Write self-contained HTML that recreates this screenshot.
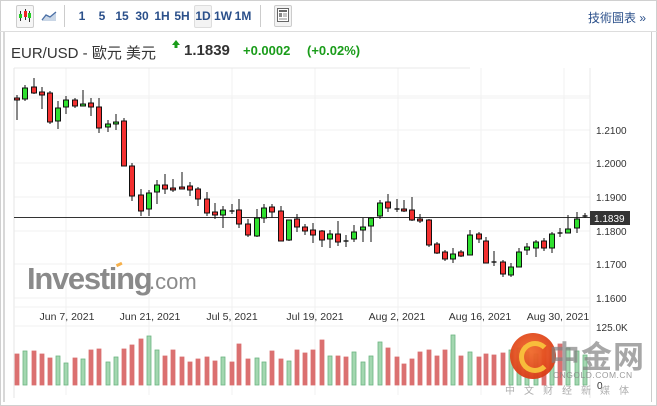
<!DOCTYPE html>
<html><head><meta charset="utf-8"><style>
body{margin:0;width:657px;height:406px;background:#fff;overflow:hidden;font-family:"Liberation Sans","Noto Sans CJK TC",sans-serif;position:relative}
.a{position:absolute}
.tb{font-size:12px;color:#2a4f8a;font-weight:bold;width:20px;text-align:center;top:9px}
</style></head><body>
<div class="a" style="left:0;top:0;width:655px;height:404px;border:1px solid #d0d0d0"></div>
<div class="a" style="left:0;top:31px;width:657px;height:1px;background:#ddd"></div>
<div class="a" style="left:3px;top:32px;width:2px;height:370px;background:#d8d8d8"></div>
<div class="a" style="left:651px;top:32px;width:1px;height:370px;background:#ccc"></div>
<!-- toolbar -->
<div class="a" style="left:16px;top:5px;width:16px;height:21px;border:1px solid #ccc;border-radius:2px;background:#f6f6f6"></div>
<svg class="a" style="left:18px;top:8px" width="14" height="16"><g stroke="#333" stroke-width="1"><line x1="2.5" y1="3" x2="2.5" y2="13"/><line x1="7.5" y1="1" x2="7.5" y2="12"/><line x1="11.5" y1="3" x2="11.5" y2="14"/></g><rect x="1" y="6" width="3" height="4" fill="#2c2"/><rect x="6" y="3" width="3" height="6" fill="#e22"/><rect x="10" y="5" width="3" height="5" fill="#2c2"/></svg>
<svg class="a" style="left:41px;top:9px" width="16" height="13"><path d="M1 11 L5 6 L9 8 L15 3 L15 12 L1 12Z" fill="#c9d6e6"/><path d="M1 11 L5 6 L9 8 L15 3" stroke="#4a6fa5" fill="none" stroke-width="1.3"/></svg>
<div class="a" style="left:64px;top:5px;width:1px;height:22px;background:#ccc"></div>
<div class="a tb" style="left:72px">1</div>
<div class="a tb" style="left:92px">5</div>
<div class="a tb" style="left:112px">15</div>
<div class="a tb" style="left:132px">30</div>
<div class="a tb" style="left:152px">1H</div>
<div class="a tb" style="left:172px">5H</div>
<div class="a" style="left:194px;top:5px;width:16px;height:21px;border:1px solid #ddd;background:#f3f3f3;border-radius:2px"></div>
<div class="a tb" style="left:193px">1D</div>
<div class="a tb" style="left:213px">1W</div>
<div class="a tb" style="left:233px">1M</div>
<div class="a" style="left:260px;top:5px;width:1px;height:22px;background:#ccc"></div>
<div class="a" style="left:274px;top:5px;width:16px;height:20px;border:1px solid #ccc;background:#f3f3f3;border-radius:2px"></div>
<svg class="a" style="left:277px;top:8px" width="12" height="14"><rect x="0.5" y="0.5" width="11" height="13" fill="#fff" stroke="#666"/><rect x="2" y="2" width="8" height="2" fill="#666"/><rect x="2" y="5" width="3" height="4" fill="#888"/><line x1="6" y1="6" x2="10" y2="6" stroke="#888"/><line x1="6" y1="8" x2="10" y2="8" stroke="#888"/><line x1="2" y1="11" x2="10" y2="11" stroke="#888"/></svg>
<div class="a" style="left:588px;top:9px;font-size:12px;color:#2a4f8a">技術圖表 »</div>
<!-- title -->
<div class="a" style="left:11px;top:42px;font-size:15px;color:#333">EUR/USD - 歐元 美元</div>
<svg class="a" style="left:172px;top:40px" width="8" height="8"><path d="M4 0 L8 5 L5.5 5 L5.5 8 L2.5 8 L2.5 5 L0 5Z" fill="#1a9c1a"/></svg>
<div class="a" style="left:184px;top:42px;font-size:15px;font-weight:bold;color:#333">1.1839</div>
<div class="a" style="left:243px;top:43px;font-size:13px;font-weight:bold;color:#1a9c1a">+0.0002</div>
<div class="a" style="left:307px;top:43px;font-size:13px;font-weight:bold;color:#1a9c1a">(+0.02%)</div>
<svg class="a" style="left:0;top:0" width="657" height="406" id="ch"></svg>
<div class="a" style="left:510px;top:333px;width:46px;height:46px;border-radius:50%;background:radial-gradient(circle at 45% 40%,#f06a2a,#d22a10);opacity:.95"></div>
<div class="a" style="left:519px;top:341px;width:22px;height:22px;border-radius:50%;border:5px solid #f9c23c;border-right-color:transparent;opacity:.95"></div>
<div class="a" style="left:549px;top:332px;font-size:31px;font-weight:bold;color:rgba(130,130,130,.7);letter-spacing:1px">中金网</div>
<div class="a" style="left:553px;top:370px;font-size:8.5px;color:rgba(130,130,130,.8);letter-spacing:.5px">CNGOLD.COM.CN</div>
<div class="a" style="left:505px;top:382px;font-size:10px;color:rgba(140,140,140,.7);letter-spacing:9px">中文财经新媒体</div>
<script>
const C=[[17,98,100,95,120,0],[25,88,99,85,101,1],[34,87,93,78,94,0],[42,92,95,87,109,0],[50,93,122,91,124,0],[58,108,121,101,129,1],[66,100,107,96,114,1],[75,100,106,98,108,0],[83,104,106,90,106,1],[91,103,107,98,116,0],[99,107,128,98,133,0],[108,124,127,120,132,1],[116,122,124,114,130,1],[124,121,166,118,166,0],[132,166,196,163,201,0],[141,195,211,189,216,0],[149,193,209,190,216,1],[157,185,192,180,204,1],[165,185,189,174,194,0],[173,188,189,179,192,0],[182,187,188,172,189,0],[190,186,190,182,196,0],[198,189,199,187,206,0],[207,199,213,192,216,0],[215,212,215,203,219,0],[223,210,215,206,228,1],[232,211,211,204,214,2],[239,210,224,199,228,0],[248,224,235,219,237,0],[257,218,236,209,237,1],[264,208,218,204,223,1],[272,207,212,204,218,0],[281,211,241,206,241,0],[289,220,240,220,241,1],[297,219,227,214,232,0],[305,227,231,224,235,0],[313,230,235,223,243,0],[322,231,240,230,247,0],[330,234,239,230,248,1],[338,234,242,221,246,0],[346,241,241,235,247,2],[354,232,239,225,242,1],[363,227,230,218,242,1],[371,218,226,217,242,1],[380,203,216,200,219,1],[388,202,208,194,212,0],[397,209,209,199,212,2],[404,209,211,200,212,0],[412,210,220,197,221,0],[420,219,221,214,223,0],[429,220,245,219,247,0],[437,244,253,242,254,0],[445,252,259,250,261,0],[453,254,259,248,263,1],[461,252,256,250,257,0],[470,235,255,230,255,1],[479,234,239,232,243,0],[486,241,263,237,263,0],[494,262,262,251,266,2],[503,262,274,260,277,0],[511,267,275,263,277,1],[519,252,267,248,267,1],[527,247,250,243,255,1],[536,242,248,240,257,1],[544,241,248,238,251,0],[552,234,248,232,253,1],[560,233,233,228,237,2],[568,229,233,215,233,1],[577,219,228,212,233,1],[585,216,217,213,218,2]];
const V=[354,351,351,354,358,356,363,358,359,350,349,362,357,349,345,339,336,350,356,350,357,362,359,357,361,357,362,344,359,358,362,351,359,361,350,353,350,340,356,356,357,352,362,356,342,348,357,364,359,352,350,356,350,335,356,352,357,354,355,353,350,348,352,354,346,350,344,348,351,355,372];
let s='';
for(let y of [96,130,163,197,231,264,298])s+=`<line x1="14" y1="${y}" x2="590" y2="${y}" stroke="#f0f0f0"/>`;
for(let x of [66,149,232,315,398,481,564])s+=`<line x1="${x}" y1="68" x2="${x}" y2="395" stroke="#f2f2f2"/>`;
s+=`<line x1="14" y1="68" x2="14" y2="398" stroke="#e6e6e6"/><line x1="590" y1="68" x2="590" y2="398" stroke="#e8e8e8"/><line x1="14" y1="68" x2="470" y2="68" stroke="#e8e8e8"/><line x1="14" y1="98" x2="590" y2="98" stroke="#f0f0f0"/>`;
s+=`<line x1="14" y1="307" x2="590" y2="307" stroke="#f0f0f0"/><line x1="14" y1="326" x2="590" y2="326" stroke="#f0f0f0"/>`;
s+=`<text x="27" y="289" font-family="Liberation Sans" font-weight="bold" font-size="31" fill="#8a8a8a" letter-spacing="-1.3">Investing</text><text x="149" y="289" font-family="Liberation Sans" font-size="22" fill="#8a8a8a">.com</text><rect x="116" y="263" width="6" height="3" fill="#f6b04b" transform="rotate(-25 119 264)"/>`;
C.forEach((c,i)=>{const t=V[i]||355;const g=c[5]==1||(c[5]==2&&i%2);s+=`<rect x="${c[0]-2}" y="${t}" width="4" height="${385-t}" fill="${g?'#a3d7b0':'#db7070'}" stroke="${g?'#6cb582':'#db7070'}" stroke-width="0.8"/>`;});
s+=`<line x1="14" y1="217.5" x2="590" y2="217.5" stroke="#333" stroke-width="1"/>`;
C.forEach(c=>{const[x,a,b,h,l,k]=c;s+=`<line x1="${x}" y1="${h}" x2="${x}" y2="${l}" stroke="#111" stroke-width="1"/>`;if(k==2)s+=`<line x1="${x-2.5}" y1="${a}" x2="${x+2.5}" y2="${a}" stroke="#111" stroke-width="1.4"/>`;else s+=`<rect x="${x-2.5}" y="${a}" width="5" height="${Math.max(b-a,2)}" fill="${k?'#2fe02f':'#f33030'}" stroke="#111" stroke-width="1"/>`;});
[['1.2100',130],['1.2000',163],['1.1900',197],['1.1800',231],['1.1700',264],['1.1600',298]].forEach(([t,y])=>s+=`<text x="596" y="${y+4}" font-family="Liberation Sans" font-size="10" fill="#333">${t}</text>`);
s+=`<rect x="590" y="211" width="40" height="14" fill="#333"/><text x="594" y="222" font-family="Liberation Sans" font-size="10" fill="#fff">1.1839</text>`;
s+=`<text x="596" y="331" font-family="Liberation Sans" font-size="10" fill="#333">125.0K</text><text x="597" y="389" font-family="Liberation Sans" font-size="10" fill="#333">0</text>`;
[['Jun 7, 2021',67],['Jun 21, 2021',150],['Jul 5, 2021',232],['Jul 19, 2021',315],['Aug 2, 2021',397],['Aug 16, 2021',480],['Aug 30, 2021',558]].forEach(([t,x])=>s+=`<text x="${x}" y="320" text-anchor="middle" font-family="Liberation Sans" font-size="10.5" fill="#333">${t}</text>`);
document.getElementById('ch').innerHTML=s;
</script>
</body></html>
